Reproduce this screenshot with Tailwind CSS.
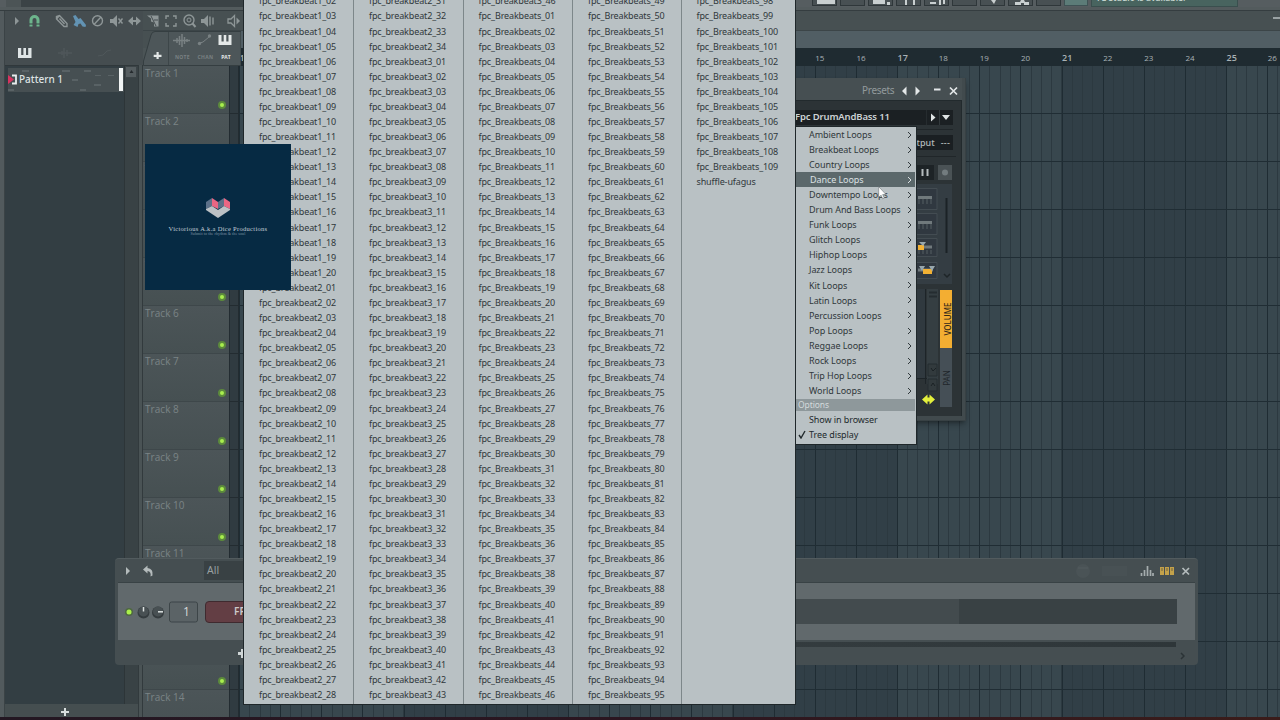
<!DOCTYPE html>
<html lang="en">

<head>
  <meta charset="UTF-8" />
  <meta name="viewport" content="width=device-width, initial-scale=1.0" />
  <script src="https://cdn.jsdelivr.net/npm/@tailwindcss/browser@4"></script>
  <title>FL Studio</title>
</head>

<body class="bg-[#33414a] overflow-hidden">
  <div class="relative w-[1280px] h-[720px] overflow-hidden flex flex-col font-['Noto_Sans','Open_Sans',sans-serif] text-[9px] bg-[#454d50]">

    <!-- Main toolbar, scrolled mostly out of view -->
    <header class="h-[7px] shrink-0 bg-[#565d60] flex">
      <div class="w-[6px]"></div>
      <div class="w-[15px] bg-[#4c5456]"></div>
      <div class="w-[764px] bg-[#3b4346]"></div>
      <div class="flex gap-[3px] pl-[27px] h-[6px]" id="tool-buttons"></div>
      <div class="w-[24px] h-[6px] ml-[3px] bg-[#5c7c78] border border-t-0 border-[#3f5355]"></div>
      <div class="w-[147px] h-[7px] ml-[3px] bg-[#48645f] border border-t-0 border-[#3a4f4e] relative">
        <span class="absolute left-[5px] -top-[9px] text-[8.5px] leading-[14px] font-semibold text-[#c3d3cd] whitespace-nowrap">FL Studio is available!</span>
      </div>
    </header>
    <div class="h-[4px] shrink-0 bg-[#535b5d] border-b border-[#353d40]"></div>

    <div class="flex flex-1 min-h-0">
      <!-- Picker panel -->
      <aside class="w-[143px] flex shrink-0">
        <div class="w-[5px] shrink-0 bg-[#525a5d] border-r border-[#3b4346]"></div>
        <div class="flex-1 min-w-0 flex flex-col">
          <div class="h-[54px] flex items-end pb-[6px] pl-[13px]">
            <svg width="110" height="12" viewBox="0 0 110 12">
              <path d="M0 1h3.2v7h2.2V1h2.6v7h2.2V1h3.3v10H0z" fill="#dfe5e6" />
              <path d="M40 6h14M44 4v4M46 1v10M49 3v6" stroke="#4f575a" stroke-width="1.5" />
              <path d="M80 9l5-1 4-4 4-1" stroke="#4f575a" fill="none" />
            </svg>
          </div>
          <div class="flex flex-1 border-t border-[#30383b]">
            <div class="w-[119px] bg-[#333e43]">
              <div class="h-[24px] mt-[2px] ml-[3px] bg-[#464f52] relative">
                <svg class="absolute inset-0" width="116" height="25" viewBox="0 0 116 25">
                  <g fill="#596265">
                    <path d="M14 2h7v2h-7zM54 2h8v2h-8zM76 2h7v2h-7zM64 11h6v2h-6zM87 7h6v1h-6zM100 7h6v1h-6zM86 16h7v2h-7zM0 21h6v2H0zM72 21h6v2h-6z" />
                  </g>
                  <path d="M4 7.500h4v8H4" fill="none" stroke="#e9edee" stroke-width="1.800" />
                  <path d="M0 7l6 4.500L0 16z" fill="#d8335f" />
                </svg>
                <div class="relative pl-[11px] leading-[23px] text-[10px] font-medium text-[#dde2e3]">Pattern 1</div>
                <div class="absolute right-[1px] top-0 w-[4px] h-[23px] bg-[#f1f4f4]"></div>
              </div>
            </div>
            <div class="w-[14px] bg-[#394245] border-l border-[#2d3538]">
              <div class="w-[12px] h-[12px] bg-[#555d60] border border-[#3c4447] flex items-center justify-center">
                <svg width="5" height="4"><path d="M2.5 0L4.5 3h-4z" fill="#252b2e" /></svg>
              </div>
            </div>
          </div>
          <div class="h-[13px] bg-[#454e50] flex items-center pl-[56px] pt-[3px]">
            <svg width="8" height="8"><path d="M3 0h2v3h3v2H5v3H3V5H0V3h3z" fill="#d7dddd" /></svg>
          </div>
          <div class="h-[3px]"></div>
        </div>
        <div class="w-[5px] shrink-0 mt-[54px] bg-[#4a5355] border-x border-[#323a3d]"></div>
      </aside>

      <!-- Playlist -->
      <section class="flex-1 flex flex-col min-w-0">
        <div class="h-[20px] shrink-0 bg-[#475052] border-b border-[#3c4548]"></div>
        <div class="h-[17px] shrink-0 flex">
          <div class="w-[97px] shrink-0 bg-[#475052]"></div>
          <div class="flex-1 bg-[#515e64]"></div>
        </div>
        <div class="h-[18px] shrink-0 flex">
          <div class="w-[96px] shrink-0 bg-[#4b5456]"></div>
          <div id="ruler" class="flex-1 min-w-0 overflow-hidden flex items-center bg-[#1f2b31] text-[#a9b2b6] pt-px pl-[0.5px] font-['Open_Sans','Noto_Sans',sans-serif]"></div>
        </div>
        <div class="flex flex-1 min-h-0">
          <div id="tracks" class="w-[86px] shrink-0"></div>
          <div class="w-[10px] shrink-0 bg-[#303b41] border-x border-[#232c31] bg-[repeating-linear-gradient(to_bottom,transparent_0px,transparent_47px,#232c31_47px,#232c31_48px)]"></div>
          <div class="flex-1 bg-[repeating-linear-gradient(to_right,#38474e_0px,#38474e_164.5px,#313f47_164.5px,#313f47_329px)]">
            <div class="h-full bg-[repeating-linear-gradient(to_right,#1f2c33_0px,#1f2c33_1px,transparent_1px,transparent_41.13px),repeating-linear-gradient(to_right,#2c3940_0px,#2c3940_1px,transparent_1px,transparent_10.28px)]">
              <div class="h-full bg-[repeating-linear-gradient(to_bottom,transparent_0px,transparent_47px,#202d34_47px,#202d34_48px)]"></div>
            </div>
          </div>
        </div>
      </section>
    </div>
    <div class="absolute left-0 bottom-0 w-full h-[3px] bg-linear-to-r from-[#231722] via-[#2b1620] to-[#3b1c1a]"></div>

    <!-- Playlist tool icons -->
    <svg class="absolute left-0 top-[11px]" width="244" height="20" viewBox="0 0 244 20" fill="none" stroke="#8e9697" stroke-width="1.4">
      <path d="M15 6l4 4-4 4z" fill="#8e9697" stroke="none" />
      <path d="M31 15.500V9a3.500 3.500 0 0 1 7 0v6.500" stroke="#6db58c" stroke-width="3" />
      <path d="M29 13h4M36 13h4" stroke="#394245" stroke-width="1" />
      <path d="M56.500 8V5.500l3-1 7.500 8v3h-3zM59.500 7.500l5 5.500M56.500 8l3-3.500" />
      <path d="M73 5l2.500-1 3 4 2-1 5.500 7-.5 2-3-.5-2-3-2 .5-1 3-4-2 2-3z" fill="#6293b3" stroke="none" />
      <circle cx="97.500" cy="9.800" r="5" /><path d="M94 13.500l7-7.500" />
      <path d="M110 8h3l4-4v12l-4-4h-3z" fill="#8e9697" stroke="none" /><path d="M118.500 7.500l4 5M122.500 7.500l-4 5" />
      <path d="M128 10l5-4.500V9h3V5.500l5 4.500-5 4.500V11h-3v3.500z" fill="#8e9697" stroke="none" />
      <path d="M147 4.500h11.500v11H154v-4l-3-1v-3z" fill="#8e9697" stroke="none" /><path d="M151 5l5 10M154 9h4" stroke="#454d50" stroke-width="1" />
      <path d="M166 8V5h3M173 5h3v3M176 12v3h-3M169 15h-3v-3" />
      <circle cx="189" cy="9" r="5" /><circle cx="189" cy="9" r="2" stroke-width="1" /><path d="M192.500 12.500l3 3.500" stroke-width="2" />
      <path d="M201 8h3l4-4v12l-4-4h-3z" fill="#8e9697" stroke="none" /><path d="M210 5.500v9M213 6.500v7" />
      <path d="M228 8h3l3.500-3.500v11L231 12h-3z" stroke-width="1.300" /><path d="M236.500 6.500l3.500 3.500-3.500 3.500z" fill="#8e9697" stroke="none" />
    </svg>

    <!-- Add track tab with note / channel / pattern modes -->
    <div class="absolute left-[143px] top-[31px] w-[98px] h-[35px]">
      <svg width="98" height="35" viewBox="0 0 98 35">
        <path d="M.5 34.500V30L8 4q1-3.500 4-3.500h86v34z" fill="#4d5659" stroke="#353e41" />
        <path d="M25.500 1v33" stroke="#3d4649" />
        <path d="M13.500 21h2.200v2.700h2.800v2.200h-2.800V28h-2.200v-2.100h-2.800v-2.200h2.800z" fill="#e4e8e8" />
        <path d="M30 9.500h17M34 7v5M36.500 5v9M39 3v13M41.500 6v7M44 8v3" stroke="#798183" stroke-width="1.500" />
        <path d="M57 12l3-1 6-5 1-1" stroke="#798183" fill="none" /><circle cx="56.500" cy="12.500" r="1.700" fill="#798183" /><circle cx="66.500" cy="5" r="1.700" fill="#798183" />
        <path d="M75.500 4h3v6.500h2.200V4h2.600v6.500h2.200V4h3v10h-13z" fill="#e4e8e8" />
      </svg>
      <div class="absolute left-[32px] top-[22px] w-[56px] flex justify-between text-[5px] leading-[8px] font-bold tracking-[0.3px] text-[#798183]">
        <span>NOTE</span><span>CHAN</span><span class="text-[#e4e8e8]">PAT</span>
      </div>
    </div>

    <div class="absolute left-[1273px] top-[17px] w-[7px] h-[2px] bg-[#9aa2a4]"></div>

    <!-- Channel rack -->
    <div class="absolute left-[115px] top-[558px] w-[1083px] h-[107px] bg-[#454e51] rounded-sm border-t border-[#525b5e] flex flex-col px-[3px]">
      <div class="h-[23px] flex items-center text-[10px] text-[#98a0a2]">
        <svg width="38" height="14" viewBox="0 0 38 14" fill="#b4bbbc">
          <path d="M8 3l4 4-4 4z" />
          <path d="M25 5.500L29.500 1.500V4q6 .5 5 7.500l-2 1q1-5-3-5.500v2.500z" />
        </svg>
        <div class="ml-[48px] w-[60px] h-[19px] bg-[#394144] pl-[3px] leading-[18px] text-[10.5px]">All</div>
        <div class="flex-1"></div>
        <svg class="mr-px" width="122" height="14" viewBox="0 0 122 14">
          <circle cx="11" cy="7" r="7" fill="#4a5356" />
          <path d="M6 4h10" stroke="#525c5f" />
          <path d="M30 2h25v10H30z" fill="#485154" />
          <path d="M69.500 12V9M72.500 12V6M75.500 12V2M78.500 12V6M81 12V9" stroke="#a5adae" stroke-width="1.700" />
          <path d="M88 3h4v8h-4zM93 3h4v8h-4zM98 3h4v8h-4z" fill="#c3a14a" />
          <path d="M90 4v3M95 4v3M100 4v3" stroke="#7d6d41" stroke-width="1.200" />
          <path d="M110.500 4l6.500 6.500M117 4l-6.500 6.500" stroke="#b5bcbd" stroke-width="1.700" />
        </svg>
      </div>
      <div class="h-[58px] bg-[#61696c] border-t border-[#394245] flex items-center">
        <svg class="shrink-0" width="86" height="24" viewBox="0 0 86 24">
          <circle cx="11" cy="12" r="4" fill="#4e6842" /><circle cx="11" cy="12" r="2.500" fill="#abf04a" />
          <circle cx="25.500" cy="12.500" r="6" fill="#353c3f" /><circle cx="25.500" cy="11.500" r="5" fill="#485053" /><path d="M25.500 7v4.500" stroke="#dce1e1" stroke-width="1.500" />
          <circle cx="40" cy="12.500" r="6" fill="#353c3f" /><circle cx="40" cy="11.500" r="5" fill="#485053" /><path d="M40 11.800h5" stroke="#dce1e1" stroke-width="1.500" />
          <rect x="51.500" y="2" width="28" height="20" rx="2" fill="#5b6366" stroke="#3d4548" />
          <text x="65" y="16" font-size="12" fill="#d5dada" font-family="Open Sans">1</text>
        </svg>
        <div class="ml-px w-[100px] h-[22px] rounded-sm bg-[#633e44] border border-[#3f2a2f] pl-[28px] leading-[19px] text-[10px] font-semibold text-[#cdc9ca]">FPC</div>
        <div class="flex-1 h-[25px] mr-[18px] flex">
          <div class="flex-1 bg-[#434b4e]"></div>
          <div class="w-[218px] bg-[#394144]"></div>
        </div>
      </div>
      <div class="flex justify-end pr-[19px]">
        <div class="w-[700px] h-[5px] mt-[2px] bg-linear-to-r from-[#384043] to-[#2e3639]"></div>
      </div>
      <div class="flex-1 flex items-center justify-between pl-[120px] pr-[10px]">
        <svg class="-mt-[6px]" width="9" height="9"><path d="M3 0h3v3h3v3H6v3H3V6H0V3h3z" fill="#cfd5d6" /></svg>
        <svg width="5" height="8"><path d="M1 1l3 3-3 3" stroke="#2b3336" fill="none" stroke-width="1.500" /></svg>
      </div>
    </div>

    <!-- FPC plugin window -->
    <div class="absolute left-[780px] top-[78px] w-[186px] h-[343px] bg-[#414a4d] border-r border-b border-[#384144] pr-[3px] pb-[4px] flex flex-col shadow-md shadow-black/30">
      <div class="h-[22px] flex items-center bg-[#464f52] pl-[82px] pt-[3px] text-[10px] text-[#929a9c]">
        <span class="tracking-[-0.3px] w-[37px]">Presets</span>
        <svg width="60" height="14" viewBox="0 0 60 14">
          <path d="M7.500 2.500v9L3 7zM16.500 2.500v9L21 7z" fill="#e3e7e8" />
          <path d="M35 5.500h6.500" stroke="#e3e7e8" stroke-width="2" />
          <path d="M51 3.500l7 7M58 3.500l-7 7" stroke="#e3e7e8" stroke-width="1.700" />
        </svg>
      </div>
      <div class="flex-1 bg-[#2c3336] border-t border-r border-[#222a2d] pt-[9px] flex flex-col">
        <div class="h-[15px] w-[173px] bg-[#1b2023] flex items-center pl-[15px] text-[9.5px] font-semibold text-[#ccd2d4] tracking-[-0.15px]">
          <span class="flex-1 whitespace-nowrap">Fpc DrumAndBass 11</span>
          <svg width="27" height="15" viewBox="0 0 27 15">
            <path d="M0 0v15M13.500 0v15" stroke="#32393c" />
            <path d="M5 3.500l4.500 4L5 11.500zM16 5h8l-4 5z" fill="#dfe4e4" />
          </svg>
        </div>
        <div class="mt-[4px] border-t border-[#202629] pt-[5px] h-[27px] w-[173px]">
          <div class="h-[15px] bg-[#1a1f22] flex items-center justify-end pr-[3px] gap-[6px] font-medium text-[#b3babc]"><span>Output</span><span class="tracking-[0.2px]">---</span></div>
        </div>
        <div class="border-t border-[#202629] w-[176px] flex-1 relative">
          <!-- Transport and pad strip -->
          <svg class="absolute left-[136px] top-0" width="42" height="256" viewBox="916 157 42 256">
            <path d="M916 165h18v15h-18z" fill="#1d2326" /><path d="M922.500 169v7M927.500 169v7" stroke="#b5bcbe" stroke-width="2" />
            <path d="M938 165h14v15h-14z" fill="#4a5255" /><circle cx="945" cy="172.500" r="3" fill="#737c7f" />
            <path d="M916 184h36v100h-36z" fill="#343d43" />
            <g fill="#303840" stroke="#434c52"><path d="M912 188.500h25v21h-25zM912 213.500h25v21h-25zM912 238.500h25v18h-25zM912 262.500h25v16h-25z" /></g>
            <path d="M918 197.500h14M918 222.500h14M924 247h8M918 270h15" stroke="#70797c" stroke-width="3" />
            <path d="M919 199v5M923 199v5M927 199v5M931 199v5M919 224v5M923 224v5M927 224v5M931 224v5M919 250v4M923 250v4M927 250v4M931 250v4" stroke="#555e62" />
            <path d="M918 245h6v5h-6zM923 269h9v5h-9z" fill="#f2b134" /><path d="M919 242h7l-3 4zM919 266h6l-3 5zM929 266h6l-3 5z" fill="#98a7ad" />
            <path d="M946.500 198v55" stroke="#1b2226" stroke-width="2" />
            <path d="M944 274l3 3 3-3" fill="none" stroke="#1e2528" stroke-width="1.500" />
            <path d="M916 289h10v89h-10z" fill="#30393f" /><path d="M925.500 289v95M916 378.500h22" stroke="#1d2428" />
            <path d="M927 289h11v95h-11z" fill="#353e42" />
            <path d="M929 292.500h8M929 296.500h8" stroke="#252c30" stroke-width="2" />
            <path d="M928 364h9v12h-9zM928 379h9v12h-9z" fill="#323a3d" stroke="#252c30" /><path d="M931 368l2 3 3-3M931 386l2-3 2 3" stroke="#1b2225" fill="none" />
            <path d="M940 290h12v58h-12z" fill="#f3ae32" /><path d="M940 348h12v59h-12z" fill="#454f56" />
            <path d="M922 399.500l5.500-5v3h2v-3l5.500 5-5.500 5v-3h-2v3z" fill="#e3f03c" />
          </svg>
          <div class="absolute left-[161px] top-[133px] w-[12px] h-[58px] flex items-center justify-center"><span class="-rotate-90 text-[8px] font-medium text-[#33291a]">VOLUME</span></div>
          <div class="absolute left-[161px] top-[191px] w-[12px] h-[59px] flex items-center justify-center"><span class="-rotate-90 text-[8px] text-[#1f262a]">PAN</span></div>
        </div>
      </div>
    </div>

    <!-- Loop category menu -->
    <nav class="absolute left-[795px] top-[126px] w-[122px] h-[319px] bg-[#b9c1c4] border border-[#1f272a] text-[#30383b] tracking-[-0.08px]">
      <div id="category-list"></div>
      <div class="h-[12px] w-[119px] bg-[#8e989b] text-[#d3dadc] leading-[12px] pl-[2px] text-[8.5px] mt-px">Options</div>
      <div class="h-[15px] leading-[15px] mt-px pl-[13px] text-[#222a2d]">Show in browser</div>
      <div class="h-[15px] leading-[15px] flex items-center text-[#222a2d]">
        <svg class="ml-[2px] mr-[3px]" width="8" height="9"><path d="M1 5l2 3 4-7" stroke="#222a2d" stroke-width="1.400" fill="none" /></svg>
        <span>Tree display</span>
      </div>
    </nav>

    <!-- Loop files menu -->
    <nav id="file-menu" class="absolute left-[243px] -top-[8px] w-[553px] h-[713px] bg-[#b9c1c4] border border-[#1f272a] text-[#30383b] tracking-[-0.13px] flex"></nav>

    <!-- Mouse cursor -->
    <svg class="absolute left-[878px] top-[186px]" width="9" height="14" viewBox="0 0 9 14"><path d="M.7.7v10.500l2.400-2 1.600 3.600 1.600-.7-1.600-3.500h3.400z" fill="#fff" stroke="#6d7578" stroke-width=".6" /></svg>

    <!-- Channel logo -->
    <div class="absolute left-[145px] top-[144px] w-[146px] h-[146px] bg-[#062a43] flex flex-col items-center pt-[54px]">
      <svg width="24" height="20" viewBox="0 0 24 20">
        <path d="M0 4l6-4v8l-6 3z" fill="#5c7088" /><path d="M6 0l6 4v7L6 8z" fill="#ea6683" />
        <path d="M12 4l6-4v8l-6 3z" fill="#5c7088" /><path d="M18 0l6 4v7l-6-3z" fill="#ea6683" />
        <path d="M0 11l6-3 6 4 6-4 6 3v1l-12 8-12-8z" fill="#bcc1c5" />
      </svg>
      <div class="mt-[6px] font-['Liberation_Serif',serif] text-[6.5px] leading-[9px] tracking-[0.3px] text-[#c3ced7] whitespace-nowrap">Victorious A.k.a Dice Productions</div>
      <div class="-mt-[2px] font-['Liberation_Serif',serif] text-[4px] leading-[6px] tracking-[0.1px] text-[#7f93a3] whitespace-nowrap">Submit to the rhythm &amp; the soul</div>
    </div>
  </div>

  <script>
    const categories = ['Ambient', 'Breakbeat', 'Country', 'Dance', 'Downtempo', 'Drum And Bass', 'Funk', 'Glitch', 'Hiphop',
      'Jazz', 'Kit', 'Latin', 'Percussion', 'Pop', 'Reggae', 'Rock', 'Trip Hop', 'World'];

    // names with a zero padded number from first to last
    function files(prefix, first, last) {
      const list = [];
      for (let i = first; i <= last; i++) list.push(prefix + String(i).padStart(2, '0'));
      return list;
    }

    const columns = [
      { width: 110, names: [...files('fpc_breakbeat1_', 2, 20), ...files('fpc_breakbeat2_', 1, 28)] },
      { width: 109.5, names: [...files('fpc_breakbeat2_', 31, 34), ...files('fpc_breakbeat3_', 1, 43)] },
      { width: 109.5, names: ['fpc_breakbeat3_46', ...files('fpc_Breakbeats_', 1, 46)] },
      { width: 108.5, names: files('fpc_Breakbeats_', 49, 95) },
      { width: 113, names: [...files('fpc_Breakbeats_', 98, 109), 'shuffle-ufagus'] },
    ];

    document.getElementById('file-menu').innerHTML = columns.map(col => `
      <div class="shrink-0 pt-[0.4px] pl-[15px] border-r border-[#7d878a] last:border-r-0" style="width: ${col.width}px">
        ${col.names.map(name => `<div class="h-[15.09px] leading-[15.09px] whitespace-nowrap">${name}</div>`).join('')}
      </div>`).join('');

    document.getElementById('category-list').innerHTML = categories.map(name => `
      <div class="h-[15.09px] w-[119px] flex items-center justify-between pr-[3px] ${name === 'Dance' ? 'pl-[14px] bg-[#5b686b] text-[#dbe1e3]' : 'pl-[13px]'}">
        <span class="whitespace-nowrap">${name} Loops</span>
        <svg class="shrink-0" width="5" height="8" viewBox="0 0 5 8"><path d="M1 1l3 3-3 3" fill="none" stroke="currentColor" /></svg>
      </div>`).join('');

    for (let n = 1; n <= 14; n++) {
      document.getElementById('tracks').innerHTML += `
        <div class="h-[48px] pl-[2px] bg-linear-to-b from-[#4c5558] to-[#465052] border-b border-[#3e474a] relative text-[10px] leading-[14px] tracking-[0.05px] font-medium font-['Open_Sans','Noto_Sans',sans-serif] text-[#7b8486]">
          Track ${n}
          <div class="absolute left-[75px] top-[35px] size-[8px] rounded-full bg-[#a9ee4e] border-2 border-[#5c8a3c]"></div>
        </div>`;
    }

    // every fourth bar is emphasised, bars 2 to 14 stay behind the open menu
    for (let bar = 1; bar <= 26; bar++) {
      document.getElementById('ruler').innerHTML += `
        <span class="w-[41.13px] shrink-0 ${(bar - 1) % 4 ? 'text-[8px]' : 'text-[9px] font-semibold'}">${bar > 1 && bar < 15 ? '' : bar}</span>`;
    }

    const glyphs = ['M4 0h18v4H4z', '', 'M4 0h12v4H4zM18 2h3v3h-3z', 'M8 0h2v5H8zM16 0h2v5h-2z', 'M5 2h6v2H5zM14 0h2v5h-2zM18 0h2v4h-2z', '', 'M10 0h5l-2 4z', 'M6 2h5l1-2h3l1 2h4v3h-5V3h-3v2H6z', ''];
    document.getElementById('tool-buttons').innerHTML = glyphs.map(d => `
      <div class="w-[25px] h-[6px] bg-[#485053] border border-t-0 border-[#2f373a]">
        <svg width="25" height="5"><path d="${d}" fill="#c9cfd0" /></svg>
      </div>`).join('');
  </script>
</body>

</html>
